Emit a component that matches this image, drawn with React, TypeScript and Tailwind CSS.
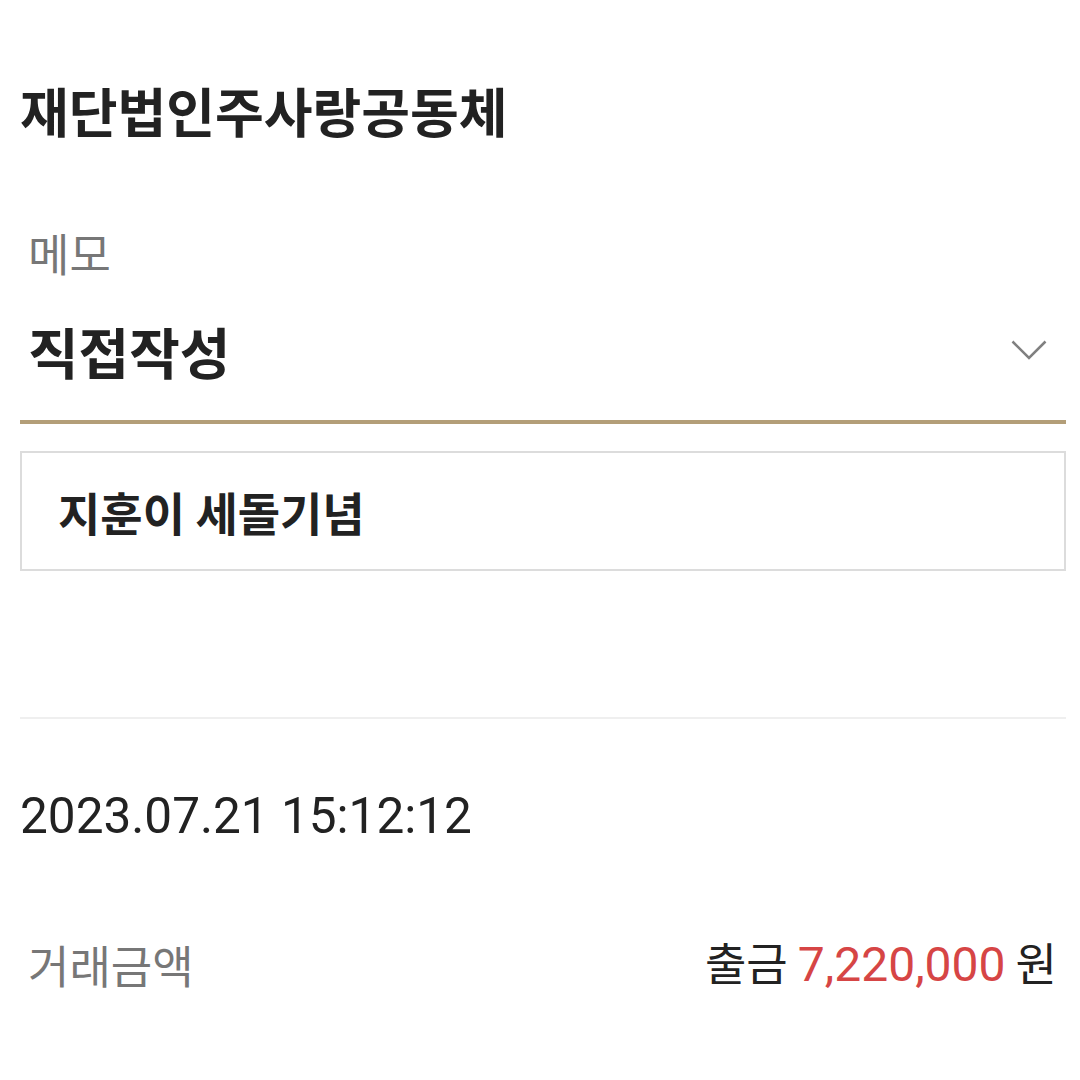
const font = { fontFamily: '"Noto Sans CJK KR", Roboto, sans-serif' };
const num = { fontFamily: 'Roboto, sans-serif' };

export default function App() {
  return (
    <div className="w-[1080px] h-[1080px] bg-white text-[#222] overflow-hidden" style={font}>
      <div className="pl-5 pr-[14px] pt-[70px]">
        <h1 className="text-[53px] leading-[80px] font-semibold">재단법인주사랑공동체</h1>

        <div className="mt-[73px]">
          <p className="pl-2 text-[45px] leading-[60px] text-[#777]">메모</p>
          <div className="mt-[31px] flex items-center justify-between border-b-4 border-[#b39e78] pb-[34px] pl-2">
            <span className="text-[55px] leading-[72px] font-bold">직접작성</span>
            <svg width="36" height="20" viewBox="0 0 36 20" className="mr-[19px]" fill="none">
              <polyline points="1.5,1.5 18,18 34.5,1.5" stroke="#808080" strokeWidth="2.5" />
            </svg>
          </div>
          <div className="mt-[27px] h-[120px] border-2 border-[#dcdcdc] flex items-center pl-[36px]">
            <span className="text-[46px] font-semibold">지훈이 세돌기념</span>
          </div>
        </div>

        <div className="mt-[146px] border-t-2 border-[#efefef]" />

        <p className="mt-[65px] text-[49.5px] leading-[64px]" style={num}>
          2023.07.21 15:12:12
        </p>

        <div className="mt-[80px] flex items-center justify-between">
          <span className="pl-2 text-[45px] text-[#777]">거래금액</span>
          <span className="pr-[9px] text-[45px]">
            출금{' '}
            <span className="text-[48px] text-[#d64545]" style={num}>7,220,000</span> 원
          </span>
        </div>
      </div>
    </div>
  );
}
